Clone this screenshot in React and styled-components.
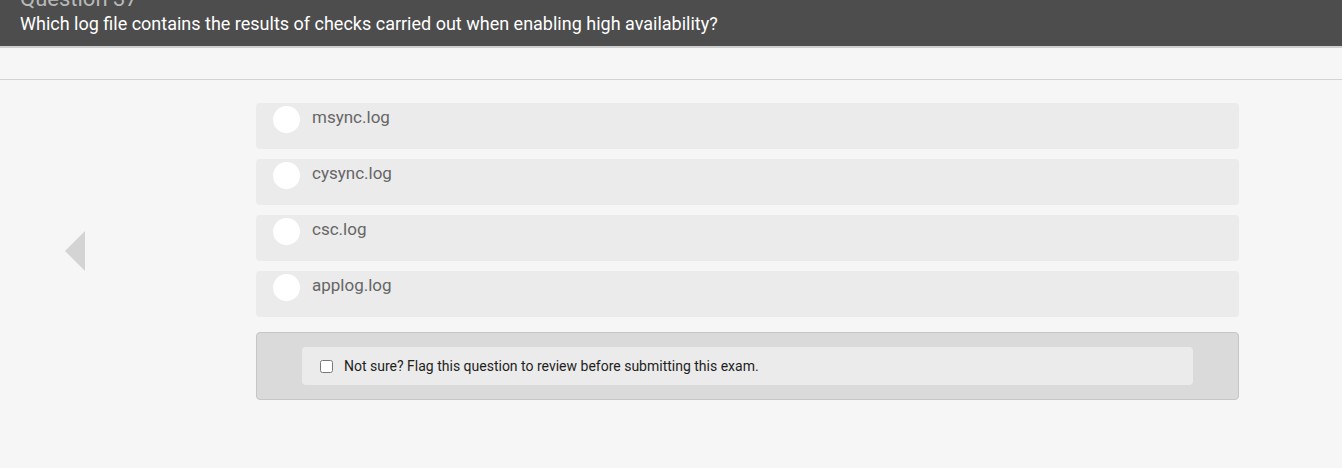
import React, { useState } from "react";
import styled, { createGlobalStyle } from "styled-components";

const GlobalStyle = createGlobalStyle`
  html, body {
    margin: 0;
    padding: 0;
    background: #f6f6f6;
    font-family: Roboto, "Liberation Sans", Arial, sans-serif;
    overflow: hidden;
  }
`;

const Header = styled.header`
  background: #4d4d4d;
  height: 48px;
  padding: 0 20px;
  box-sizing: border-box;
  border-bottom: 2px solid #cfcfcf;
  overflow: hidden;
`;

const QuestionNumber = styled.div`
  color: #b8b8b8;
  font-size: 22px;
  line-height: 26px;
  margin-top: -14px;
`;

const QuestionText = styled.div`
  color: #fff;
  font-size: 18px;
  line-height: 22px;
  margin-top: 1px;
`;

const Toolbar = styled.div`
  height: 31px;
  border-bottom: 1px solid #d3d3d3;
`;

const Body = styled.div`
  display: grid;
  grid-template-columns: 256px 983px;
  padding-top: 23px;
`;

const NavCol = styled.div`
  display: flex;
  justify-content: flex-start;
  padding: 128px 0 0 65px;
`;

const PrevArrow = styled.div`
  width: 0;
  height: 0;
  border-top: 20px solid transparent;
  border-bottom: 20px solid transparent;
  border-right: 20px solid #d4d4d4;
`;

const Answers = styled.div`
  display: flex;
  flex-direction: column;
  gap: 10px;
`;

const Option = styled.label`
  display: flex;
  align-items: flex-start;
  gap: 12px;
  height: 46px;
  box-sizing: border-box;
  padding: 3px 17px;
  background: ${(p) => (p.$selected ? "#e2e2e2" : "#ebebeb")};
  border-radius: 4px;
  cursor: pointer;
`;

const Radio = styled.span`
  width: 27px;
  height: 27px;
  border-radius: 50%;
  background: #fff;
  flex: none;
  box-shadow: ${(p) => (p.$checked ? "inset 0 0 0 7px #4d4d4d" : "none")};
`;

const OptionText = styled.span`
  color: #666;
  font-size: 17px;
  line-height: 20px;
  padding-top: 1px;
`;

const FlagBox = styled.div`
  margin-top: 5px;
  background: #dadada;
  border: 1px solid #c6c6c6;
  border-radius: 4px;
  padding: 14px 45px 14px 45px;
`;

const FlagInner = styled.label`
  display: flex;
  align-items: center;
  gap: 11px;
  height: 38px;
  padding: 0 18px;
  background: #ebebeb;
  border-radius: 4px;
  color: #1e1e1e;
  font-size: 14px;
`;

const Check = styled.input`
  width: 13px;
  height: 13px;
  margin: 0;
`;

const options = ["msync.log", "cysync.log", "csc.log", "applog.log"];

export default function App() {
  const [picked, setPicked] = useState(null);
  const [flag, setFlag] = useState(false);

  return (
    <>
      <GlobalStyle />
      <Header>
        <QuestionNumber>Question 37</QuestionNumber>
        <QuestionText>
          Which log file contains the results of checks carried out when
          enabling high availability?
        </QuestionText>
      </Header>
      <Toolbar />
      <Body>
        <NavCol>
          <PrevArrow />
        </NavCol>
        <Answers>
          {options.map((opt, i) => (
            <Option
              key={opt}
              $selected={picked === i}
              onClick={() => setPicked(i)}
            >
              <Radio $checked={picked === i} />
              <OptionText>{opt}</OptionText>
            </Option>
          ))}
          <FlagBox>
            <FlagInner>
              <Check
                type="checkbox"
                checked={flag}
                onChange={() => setFlag(!flag)}
              />
              Not sure? Flag this question to review before submitting this exam.
            </FlagInner>
          </FlagBox>
        </Answers>
      </Body>
    </>
  );
}
